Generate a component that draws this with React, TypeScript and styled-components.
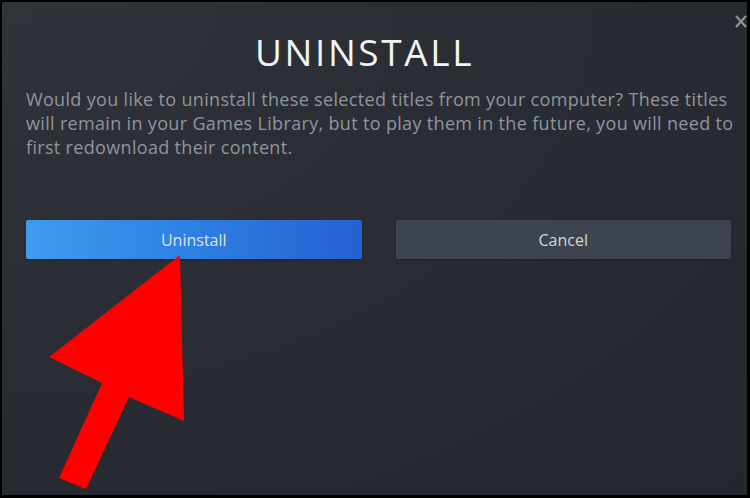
import React from "react";
import styled, { createGlobalStyle } from "styled-components";

const Global = createGlobalStyle`
  html, body { margin: 0; padding: 0; background: #000; }
  body { width: 750px; height: 498px; overflow: hidden; }
`;

const Frame = styled.div`
  width: 750px;
  height: 498px;
  box-sizing: border-box;
  padding: 2px 3px 3px 2px;
  background: #000;
`;

const Dialog = styled.div`
  position: relative;
  height: 100%;
  box-sizing: border-box;
  padding: 28px 16px 0 24px;
  background: radial-gradient(ellipse at 0% 0%, #30333a 0%, #2a2d34 45%, #25272f 100%);
  font-family: "Open Sans", "Noto Sans", sans-serif;
  overflow: hidden;
`;

const Close = styled.svg`
  position: absolute;
  top: 13px;
  right: 0px;
  width: 12px;
  height: 13px;
`;

const Title = styled.h1`
  margin: 0 28px 0 0;
  text-align: center;
  font-family: "Open Sans", "Noto Sans", sans-serif;
  font-weight: 400;
  font-size: 37px;
  line-height: 44px;
  letter-spacing: 2.6px;
  color: #f2f3f5;
`;

const Body = styled.p`
  margin: 13px 0 0 0;
  font-size: 18px;
  line-height: 24px;
  letter-spacing: 0.33px;
  color: #8e959e;
  white-space: nowrap;
`;

const Line = styled.span`
  display: block;
`;

const Buttons = styled.div`
  display: grid;
  grid-template-columns: 1fr 1fr;
  gap: 34px;
  margin-top: 61px;
`;

const Button = styled.button<{ $primary?: boolean }>`
  height: 39px;
  border: none;
  border-radius: 2px;
  font-family: "Open Sans", "Noto Sans", sans-serif;
  font-size: 16px;
  color: ${(p) => (p.$primary ? "#d6e6f7" : "#d0d5db")};
  background: ${(p) =>
    p.$primary
      ? "linear-gradient(90deg, #3e9cf0 0%, #2f7ee2 50%, #2461d1 100%)"
      : "#3d4450"};
  box-shadow: 0 1px 2px rgba(0, 0, 0, 0.25);
  cursor: pointer;
`;

const Arrow = styled.svg`
  position: absolute;
  left: -2px;
  top: -2px;
  width: 750px;
  height: 498px;
  pointer-events: none;
`;

export default function App() {
  return (
    <>
      <Global />
      <Frame>
        <Dialog>
          <Close viewBox="0 0 12 13">
            <path d="M1 1 L11 12 M11 1 L1 12" stroke="#8d939b" strokeWidth="2.2" />
          </Close>
          <Title>UNINSTALL</Title>
          <Body>
            <Line>Would you like to uninstall these selected titles from your computer? These titles</Line>
            <Line>will remain in your Games Library, but to play them in the future, you will need to</Line>
            <Line>first redownload their content.</Line>
          </Body>
          <Buttons>
            <Button $primary>Uninstall</Button>
            <Button>Cancel</Button>
          </Buttons>
          <Arrow viewBox="0 0 750 498">
            <polygon
              points="180,255 49,357 102,383 59,478 86,489 129,397 184,421"
              fill="#ff0000"
            />
          </Arrow>
        </Dialog>
      </Frame>
    </>
  );
}
